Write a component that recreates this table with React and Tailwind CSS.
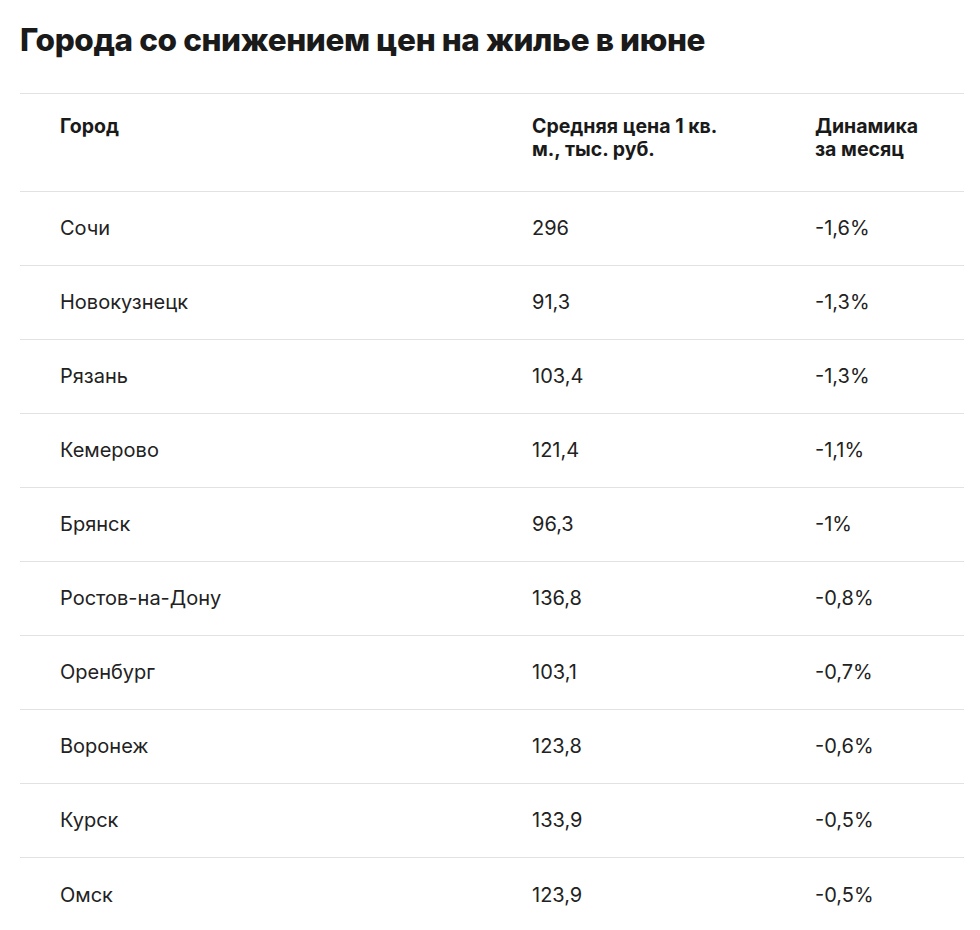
const rows = [
  ["Сочи", "296", "-1,6%"],
  ["Новокузнецк", "91,3", "-1,3%"],
  ["Рязань", "103,4", "-1,3%"],
  ["Кемерово", "121,4", "-1,1%"],
  ["Брянск", "96,3", "-1%"],
  ["Ростов-на-Дону", "136,8", "-0,8%"],
  ["Оренбург", "103,1", "-0,7%"],
  ["Воронеж", "123,8", "-0,6%"],
  ["Курск", "133,9", "-0,5%"],
  ["Омск", "123,9", "-0,5%"],
];

export default function App() {
  return (
    <div
      className="w-[980px] h-[930px] bg-white text-[#1c1c1c] overflow-hidden"
      style={{ fontFamily: "Inter, 'Noto Sans', sans-serif" }}
    >
      <h1 className="pl-5 pt-[21px] text-[31.5px] leading-[37px] font-extrabold tracking-[-0.4px] text-[#1a1a1a]">
        Города со снижением цен на жилье в июне
      </h1>

      <div className="ml-5 w-[944px] mt-[35px]">
        <div className="grid grid-cols-[472px_283px_1fr] pl-10 border-t border-b border-[#e2e2e2] h-[99px] pt-[21px] text-[19.5px] leading-[23px] font-bold text-[#1a1a1a]">
          <div>Город</div>
          <div className="max-w-[200px]">Средняя цена 1 кв. м., тыс. руб.</div>
          <div className="max-w-[110px]">Динамика за месяц</div>
        </div>

        {rows.map((r, i) => (
          <div
            key={r[0]}
            className={
              "grid grid-cols-[472px_283px_1fr] items-center pl-10 h-[74px] pb-[1px] text-[20px] text-[#222]" +
              (i < rows.length - 1 ? " border-b border-[#e2e2e2]" : "")
            }
          >
            <div>{r[0]}</div>
            <div>{r[1]}</div>
            <div>{r[2]}</div>
          </div>
        ))}
      </div>
    </div>
  );
}
